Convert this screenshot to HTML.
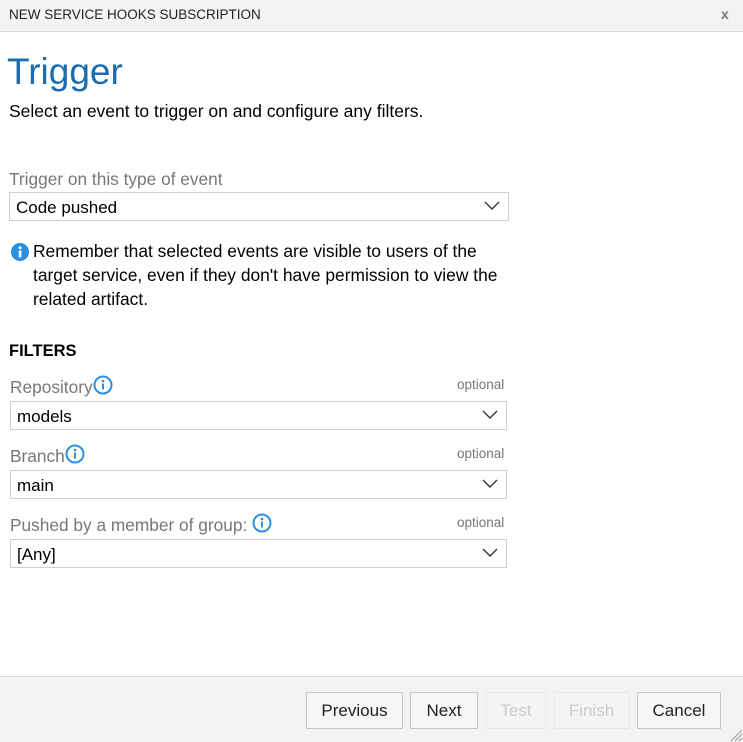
<!DOCTYPE html>
<html><head><meta charset="utf-8"><style>
*{margin:0;padding:0;box-sizing:border-box}
body{width:743px;height:742px;position:relative;background:#fff;font-family:"Liberation Sans",sans-serif;overflow:hidden;color:#000}
.a{position:absolute;white-space:nowrap}
.hdr{left:0;top:0;width:743px;height:32px;background:#f3f3f3;border-bottom:1px solid #dadada}
.lbl{color:#777;font-size:17.3px}
.sel{position:absolute;border:1px solid #cfcfcf;background:#fff;height:29px;font-size:17px;padding:5px 0 0 6px}
.sel svg{position:absolute;right:8px;top:8px}
.opt{color:#777;font-size:13.5px}
.ic{position:absolute}
.btn{position:absolute;top:692px;height:37px;border:1px solid #c6c6c6;background:#f6f6f6;font-size:17px;text-align:center;line-height:35px;color:#222}
.dis{border-color:#e6e6e6;color:#ccc;background:#f4f4f4}
</style></head><body>
<div class="a hdr"></div>
<div class="a" style="left:9px;top:7px;font-size:13.5px;color:#222">NEW SERVICE HOOKS SUBSCRIPTION</div>
<div class="a" style="left:721px;top:6px;font-size:14px;font-weight:bold;color:#777">x</div>
<div class="a" style="left:7px;top:51px;font-size:37px;color:#1c6cb0">Trigger</div>
<div class="a" style="left:9px;top:101px;font-size:17.5px">Select an event to trigger on and configure any filters.</div>

<div class="a lbl" style="left:9px;top:169px">Trigger on this type of event</div>
<div class="sel" style="left:9px;top:192px;width:500px">Code pushed<svg width="16" height="10" viewBox="0 0 16 10"><path d="M1 1l7 7 7-7" fill="none" stroke="#333" stroke-width="1.4"/></svg></div>

<svg class="ic" style="left:11px;top:243px" width="18" height="18" viewBox="0 0 18 18"><circle cx="9" cy="9" r="9" fill="#2a8fe0"/><rect x="7.8" y="7.5" width="2.6" height="7" fill="#fff"/><circle cx="9.1" cy="4.8" r="1.5" fill="#fff"/></svg>
<div class="a" style="left:33px;top:239px;font-size:17.4px;line-height:24px">Remember that selected events are visible to users of the<br>target service, even if they don't have permission to view the<br>related artifact.</div>

<div class="a" style="left:9px;top:342px;font-size:16.5px;font-weight:bold">FILTERS</div>

<div class="a lbl" style="left:10px;top:377px">Repository</div>
<svg class="ic" style="left:93px;top:375px" width="20" height="20" viewBox="0 0 20 20"><circle cx="10" cy="10" r="8.5" fill="none" stroke="#2a8fe0" stroke-width="2"/><rect x="9" y="8.5" width="2" height="6" fill="#2a8fe0"/><circle cx="10" cy="6" r="1.3" fill="#2a8fe0"/></svg>
<div class="a opt" style="left:457px;top:377px">optional</div>
<div class="sel" style="left:10px;top:401px;width:497px">models<svg width="16" height="10" viewBox="0 0 16 10"><path d="M1 1l7 7 7-7" fill="none" stroke="#333" stroke-width="1.4"/></svg></div>

<div class="a lbl" style="left:10px;top:446px">Branch</div>
<svg class="ic" style="left:65px;top:444px" width="20" height="20" viewBox="0 0 20 20"><circle cx="10" cy="10" r="8.5" fill="none" stroke="#2a8fe0" stroke-width="2"/><rect x="9" y="8.5" width="2" height="6" fill="#2a8fe0"/><circle cx="10" cy="6" r="1.3" fill="#2a8fe0"/></svg>
<div class="a opt" style="left:457px;top:446px">optional</div>
<div class="sel" style="left:10px;top:470px;width:497px">main<svg width="16" height="10" viewBox="0 0 16 10"><path d="M1 1l7 7 7-7" fill="none" stroke="#333" stroke-width="1.4"/></svg></div>

<div class="a lbl" style="left:10px;top:515px">Pushed by a member of group:</div>
<svg class="ic" style="left:252px;top:513px" width="20" height="20" viewBox="0 0 20 20"><circle cx="10" cy="10" r="8.5" fill="none" stroke="#2a8fe0" stroke-width="2"/><rect x="9" y="8.5" width="2" height="6" fill="#2a8fe0"/><circle cx="10" cy="6" r="1.3" fill="#2a8fe0"/></svg>
<div class="a opt" style="left:457px;top:515px">optional</div>
<div class="sel" style="left:10px;top:539px;width:497px">[Any]<svg width="16" height="10" viewBox="0 0 16 10"><path d="M1 1l7 7 7-7" fill="none" stroke="#333" stroke-width="1.4"/></svg></div>

<div class="a" style="left:0;top:676px;width:743px;height:66px;background:#f3f3f3;border-top:1px solid #d8d8d8"></div>
<div class="btn" style="left:306px;width:97px">Previous</div>
<div class="btn" style="left:410px;width:68px">Next</div>
<div class="btn dis" style="left:486px;width:60px">Test</div>
<div class="btn dis" style="left:554px;width:75px">Finish</div>
<div class="btn" style="left:637px;width:84px">Cancel</div>
<svg class="ic" style="left:729px;top:728px" width="14" height="14" viewBox="0 0 14 14"><path d="M13 2L2 13M13 6L6 13M13 10L10 13" stroke="#999" stroke-width="1"/></svg>
</body></html>
